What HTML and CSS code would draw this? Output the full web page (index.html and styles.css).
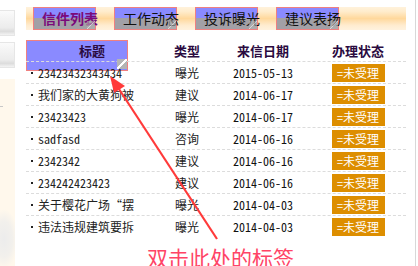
FILE: index.html
```html
<!DOCTYPE html>
<html lang="zh-CN">
<head>
    <meta charset="UTF-8">
    <title>信件列表</title>
    <link rel="stylesheet" href="styles.css">
</head>
<body>
<div class="page">
    <aside class="side">
        <div class="side-card"></div>
        <div class="side-card"></div>
        <div class="side-bg"><span class="side-line"></span></div>
    </aside>

    <main class="main">
        <nav class="tabs">
            <div class="tab active">信件列表<i class="grip"></i></div>
            <div class="tab">工作动态<i class="grip"></i></div>
            <div class="tab">投诉曝光<i class="grip"></i></div>
            <div class="tab">建议表扬<i class="grip"></i></div>
        </nav>

        <div class="list">
            <div class="row head">
                <div class="cell">标题</div>
                <div class="cell">类型</div>
                <div class="cell">来信日期</div>
                <div class="cell">办理状态</div>
            </div>
            <div class="row">
                <div class="cell title"><b class="dot"></b><span class="txt">23423432343434</span></div>
                <div class="cell">曝光</div>
                <div class="cell date">2015-05-13</div>
                <div class="cell"><span class="badge">＝未受理</span></div>
            </div>
            <div class="row">
                <div class="cell title"><b class="dot"></b><span class="txt">我们家的大黄狗被</span></div>
                <div class="cell">建议</div>
                <div class="cell date">2014-06-17</div>
                <div class="cell"><span class="badge">＝未受理</span></div>
            </div>
            <div class="row">
                <div class="cell title"><b class="dot"></b><span class="txt">23423423</span></div>
                <div class="cell">曝光</div>
                <div class="cell date">2014-06-17</div>
                <div class="cell"><span class="badge">＝未受理</span></div>
            </div>
            <div class="row">
                <div class="cell title"><b class="dot"></b><span class="txt">sadfasd</span></div>
                <div class="cell">咨询</div>
                <div class="cell date">2014-06-16</div>
                <div class="cell"><span class="badge">＝未受理</span></div>
            </div>
            <div class="row">
                <div class="cell title"><b class="dot"></b><span class="txt">2342342</span></div>
                <div class="cell">建议</div>
                <div class="cell date">2014-06-16</div>
                <div class="cell"><span class="badge">＝未受理</span></div>
            </div>
            <div class="row">
                <div class="cell title"><b class="dot"></b><span class="txt">234242423423</span></div>
                <div class="cell">建议</div>
                <div class="cell date">2014-06-16</div>
                <div class="cell"><span class="badge">＝未受理</span></div>
            </div>
            <div class="row">
                <div class="cell title"><b class="dot"></b><span class="txt">关于樱花广场<span class="quote">“</span>摆</span></div>
                <div class="cell">曝光</div>
                <div class="cell date">2014-04-03</div>
                <div class="cell"><span class="badge">＝未受理</span></div>
            </div>
            <div class="row">
                <div class="cell title"><b class="dot"></b><span class="txt">违法违规建筑要拆</span></div>
                <div class="cell">曝光</div>
                <div class="cell date">2014-04-03</div>
                <div class="cell"><span class="badge">＝未受理</span></div>
            </div>
        </div>

        <!-- 选中的标签控件 -->
        <div class="sel-box"></div>
        <i class="grip sel-grip"></i>
    </main>

    <div class="rule"></div>

    <svg class="arrow" width="418" height="266" viewBox="0 0 418 266">
        <line x1="117" y1="86" x2="217" y2="239" stroke="#ff3a3a" stroke-width="2.2"/>
        <polygon points="110,76 125,86 114,93" fill="#ff3a3a"/>
    </svg>
    <div class="tip">双击此处的标签</div>
</div>
</body>
</html>
```

FILE: styles.css
```css
body {
    margin: 0;
    background-color: #fff;
    font-family: "Noto Sans CJK SC", sans-serif;
    font-feature-settings: "hwid";
    color: #222;
}

.page {
    position: relative;
    display: flex;
    width: 418px;
    height: 266px;
    overflow: hidden;
}

/* 左边的侧栏 */
.side {
    width: 15px;
    display: flex;
    flex-direction: column;
    padding-top: 10px;
    gap: 6px;
}

.side-card {
    height: 24px;
    border: 1px solid #e6e6e6;
    border-left: none;
    background: linear-gradient(#fbfbfb 0, #f4f4f4 30%, #ececec 70%, #dcdcdc 85%, #f4f4f4 100%);
}

.side-bg {
    flex: 1;
    margin-top: 5px;
    background:
        radial-gradient(ellipse 14px 30px at 4px 160px, #ececec 0, #f2f0ec 60%, rgba(255, 248, 236, 0) 100%),
        #fff8ec;
    position: relative;
}

.side-line {
    position: absolute;
    left: 0;
    top: 27px;
    width: 3px;
    height: 1px;
    background-color: #c8c8c8;
}

/* 主内容 */
.main {
    position: relative;
    width: 380px;
    margin-left: 11px;
    padding-top: 7px;
}

.tabs {
    display: flex;
    gap: 18px;
    height: 23px;
    padding-left: 7px;
    background: linear-gradient(#fff2dc 0, #ffeccc 20%, #ffe2b4 35%, #ffd89c 50%, #ffe2b6 65%, #ffecd0 80%, #fff2de 100%);
}

.tab {
    position: relative;
    width: 53px;
    height: 21px;
    padding-left: 9px;
    border: 1px solid #f08080;
    border-left-width: 0;
    box-sizing: content-box;
    background: linear-gradient(#8a8aff 0, #8a8aff 48%, #a2a0a6 48%, #a2a0a6 100%);
    font-size: 14px;
    line-height: 21px;
    white-space: nowrap;
    color: #111;
}

.tab::before {
    content: "";
    position: absolute;
    left: 0;
    top: -1px;
    bottom: -1px;
    border-left: 1px solid #f08080;
}

.tab.active {
    font-weight: bold;
    color: #7a0a7a;
}

.tab .grip {
    right: 0;
    bottom: 0;
    width: 8px;
    height: 8px;
    opacity: 0.6;
}

.grip {
    position: absolute;
    background-color: #b4b4b4;
    background-image: linear-gradient(135deg, transparent 44%, #fff 44%, #fff 56%, transparent 56%);
    z-index: 3;
}

/* 列表 */
.list {
    position: relative;
    z-index: 1;
    margin-top: 10px;
}

.row {
    display: grid;
    grid-template-columns: 132px 58px 94px 96px;
    height: 21px;
    border-bottom: 1px dashed #dcdcdc;
    font-size: 12px;
    align-items: center;
}

.row:last-child {
    border-bottom: none;
}

.cell {
    text-align: center;
    white-space: nowrap;
}

.head .cell {
    font-size: 13px;
    font-weight: bold;
    color: #2a0a40;
}

.title {
    display: flex;
    align-items: center;
    padding-left: 5px;
    text-align: left;
}

.dot {
    width: 2px;
    height: 2px;
    margin-right: 5px;
    background-color: #222;
}

.quote {
    font-feature-settings: normal;
}

.date {
    color: #111;
}

.badge {
    display: inline-block;
    width: 53px;
    height: 18px;
    line-height: 18px;
    background-color: #dd8e00;
    color: #fff;
    font-size: 12px;
}

/* 选中框 */
.sel-box {
    position: absolute;
    left: 0;
    top: 40px;
    width: 100px;
    height: 29px;
    background-color: #8a8aff;
    border: 1px solid #f08080;
    z-index: 0;
}

.sel-grip {
    left: 91px;
    top: 59px;
    width: 10px;
    height: 10px;
}

.rule {
    width: 1px;
    margin-left: 9px;
    background-color: #d8d8d8;
}

/* 标注 */
.arrow {
    position: absolute;
    left: 0;
    top: 0;
    z-index: 5;
}

.tip {
    position: absolute;
    left: 147px;
    top: 244px;
    font-size: 21px;
    line-height: 26px;
    color: #ff4466;
    z-index: 5;
    font-feature-settings: normal;
}
```
